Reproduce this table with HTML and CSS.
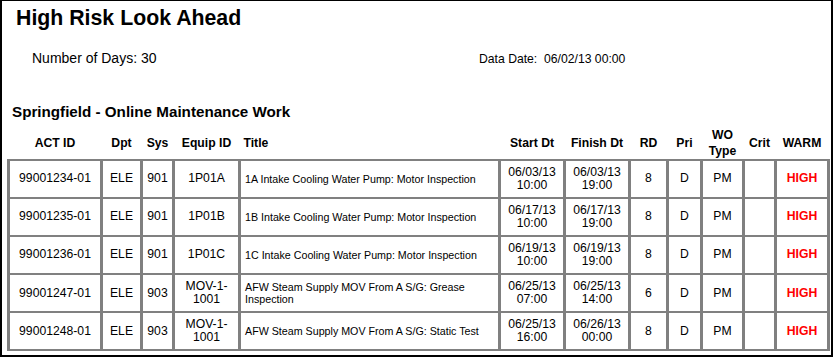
FILE: index.html
```html
<!DOCTYPE html>
<html>
<head>
<meta charset="utf-8">
<link rel="stylesheet" href="styles.css">
</head>
<body>
<div class="page">
  <h1 class="title">High Risk Look Ahead</h1>
  <div class="info">
    <div class="days">Number of Days: 30</div>
    <div class="date">Data Date:&nbsp; 06/02/13 00:00</div>
  </div>
  <h2 class="section">Springfield - Online Maintenance Work</h2>
  <table class="grid">
    <colgroup>
      <col class="c-act"><col class="c-dpt"><col class="c-sys"><col class="c-eq"><col class="c-title"><col class="c-start"><col class="c-fin"><col class="c-rd"><col class="c-pri"><col class="c-wo"><col class="c-crit"><col class="c-warm">
    </colgroup>
    <thead>
      <tr>
        <th>ACT ID</th><th>Dpt</th><th>Sys</th><th>Equip ID</th><th class="left">Title</th><th>Start Dt</th><th>Finish Dt</th><th>RD</th><th>Pri</th><th>WO<br>Type</th><th>Crit</th><th>WARM</th>
      </tr>
    </thead>
    <tbody>
      <tr>
        <td>99001234-01</td><td>ELE</td><td>901</td><td>1P01A</td><td class="ttl">1A Intake Cooling Water Pump: Motor Inspection</td><td>06/03/13<br>10:00</td><td>06/03/13<br>19:00</td><td>8</td><td>D</td><td>PM</td><td></td><td class="warm">HIGH</td>
      </tr>
      <tr>
        <td>99001235-01</td><td>ELE</td><td>901</td><td>1P01B</td><td class="ttl">1B Intake Cooling Water Pump: Motor Inspection</td><td>06/17/13<br>10:00</td><td>06/17/13<br>19:00</td><td>8</td><td>D</td><td>PM</td><td></td><td class="warm">HIGH</td>
      </tr>
      <tr>
        <td>99001236-01</td><td>ELE</td><td>901</td><td>1P01C</td><td class="ttl">1C Intake Cooling Water Pump: Motor Inspection</td><td>06/19/13<br>10:00</td><td>06/19/13<br>19:00</td><td>8</td><td>D</td><td>PM</td><td></td><td class="warm">HIGH</td>
      </tr>
      <tr>
        <td>99001247-01</td><td>ELE</td><td>903</td><td>MOV-1-<br>1001</td><td class="ttl">AFW Steam Supply MOV From A S/G: Grease Inspection</td><td>06/25/13<br>07:00</td><td>06/25/13<br>14:00</td><td>6</td><td>D</td><td>PM</td><td></td><td class="warm">HIGH</td>
      </tr>
      <tr>
        <td>99001248-01</td><td>ELE</td><td>903</td><td>MOV-1-<br>1001</td><td class="ttl">AFW Steam Supply MOV From A S/G: Static Test</td><td>06/25/13<br>16:00</td><td>06/26/13<br>00:00</td><td>8</td><td>D</td><td>PM</td><td></td><td class="warm">HIGH</td>
      </tr>
    </tbody>
  </table>
</div>
</body>
</html>
```

FILE: styles.css
```css
html, body {
  margin: 0;
  padding: 0;
  background: #fff;
}
body {
  font-family: "Liberation Sans", Arial, sans-serif;
  color: #000;
}
.page {
  box-sizing: border-box;
  width: 833px;
  height: 357px;
  border-top: 1px solid #000;
  border-left: 2px solid #000;
  border-right: 2px solid #000;
  border-bottom: 2px solid #000;
  overflow: hidden;
}
.title {
  margin: 0;
  padding: 5px 0 0 14px;
  font-size: 21.3px;
  line-height: 24px;
  font-weight: bold;
}
.info {
  display: flex;
  margin-top: 20px;
  padding-left: 30px;
  height: 16px;
  align-items: baseline;
}
.days {
  width: 447px;
  font-size: 14px;
  line-height: 16px;
}
.date {
  font-size: 12.2px;
  line-height: 16px;
}
.section {
  margin: 37px 0 0 10px;
  font-size: 15.2px;
  line-height: 18px;
  font-weight: bold;
}
.grid {
  margin-left: 5px;
  margin-top: 3px;
  border-collapse: collapse;
  table-layout: fixed;
  width: 823px;
}
.c-act { width: 93px; }
.c-dpt { width: 40px; }
.c-sys { width: 32px; }
.c-eq { width: 66px; }
.c-title { width: 260px; }
.c-start { width: 65px; }
.c-fin { width: 65px; }
.c-rd { width: 38px; }
.c-pri { width: 34px; }
.c-wo { width: 42px; }
.c-crit { width: 32px; }
.c-warm { width: 53px; }
.grid th {
  font-size: 12.2px;
  font-weight: bold;
  line-height: 16px;
  text-align: center;
  vertical-align: middle;
  padding: 3px 0 0;
  height: 31px;
}
.grid th.left {
  text-align: left;
  padding-left: 4px;
}
.grid td {
  border-left: 3px solid #808080;
  border-right: 3px solid #808080;
  border-top: 2px solid #808080;
  border-bottom: 2px solid #808080;
  font-size: 12.2px;
  line-height: 13.5px;
  text-align: center;
  vertical-align: middle;
  padding: 0 2px;
  height: 38.1px;
  box-sizing: border-box;
}
.grid td.ttl {
  text-align: left;
  font-size: 10.7px;
  line-height: 12.5px;
  padding-left: 4px;
}
.grid td.warm {
  color: #ff0000;
  font-weight: bold;
}
```
